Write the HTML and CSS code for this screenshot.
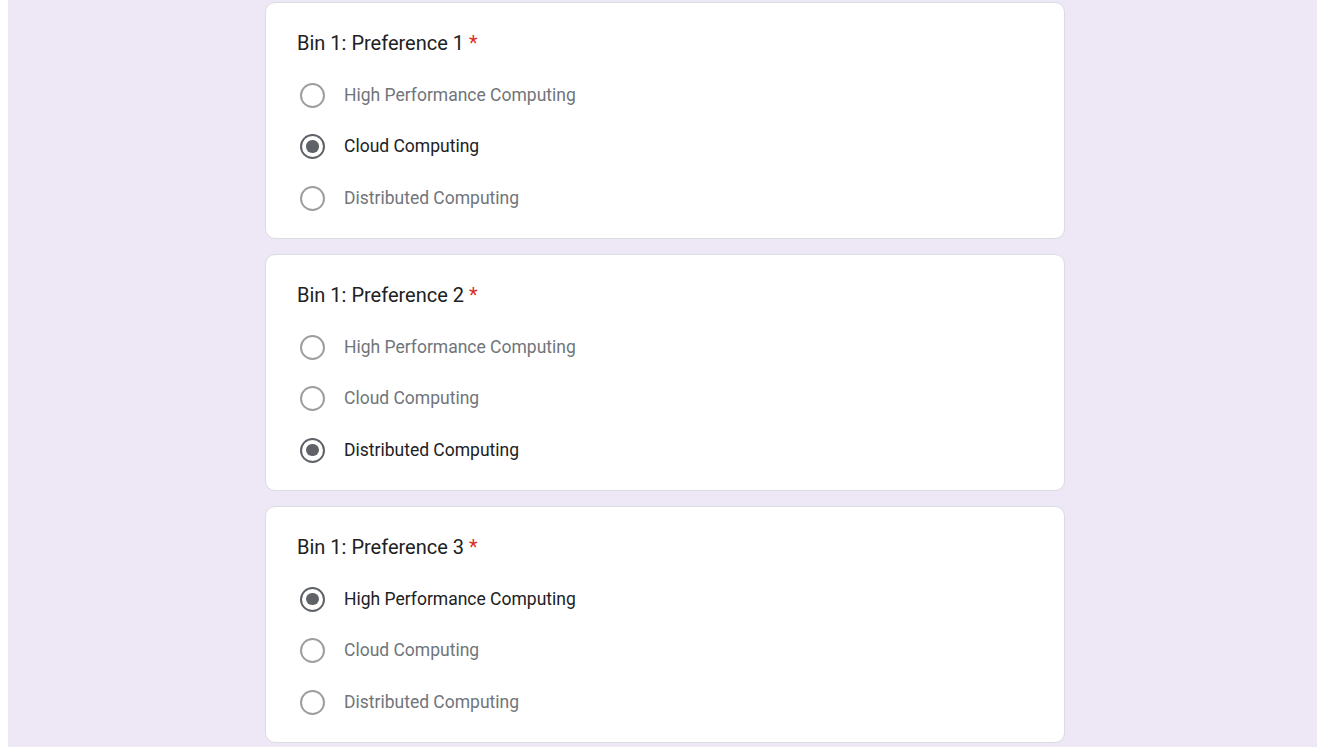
FILE: index.html
```html
<!DOCTYPE html>
<html>
<head>
<meta charset="utf-8">
<link rel="stylesheet" href="styles.css">
</head>
<body>
<div class="page">
  <div class="card">
    <div class="title">Bin 1: Preference 1 <span class="req">*</span></div>
    <div class="options">
      <div class="opt"><span class="radio"></span><span class="label">High Performance Computing</span></div>
      <div class="opt on"><span class="radio"></span><span class="label">Cloud Computing</span></div>
      <div class="opt"><span class="radio"></span><span class="label">Distributed Computing</span></div>
    </div>
  </div>
  <div class="card">
    <div class="title">Bin 1: Preference 2 <span class="req">*</span></div>
    <div class="options">
      <div class="opt"><span class="radio"></span><span class="label">High Performance Computing</span></div>
      <div class="opt"><span class="radio"></span><span class="label">Cloud Computing</span></div>
      <div class="opt on"><span class="radio"></span><span class="label">Distributed Computing</span></div>
    </div>
  </div>
  <div class="card">
    <div class="title">Bin 1: Preference 3 <span class="req">*</span></div>
    <div class="options">
      <div class="opt on"><span class="radio"></span><span class="label">High Performance Computing</span></div>
      <div class="opt"><span class="radio"></span><span class="label">Cloud Computing</span></div>
      <div class="opt"><span class="radio"></span><span class="label">Distributed Computing</span></div>
    </div>
  </div>
</div>
</body>
</html>
```

FILE: styles.css
```css
html, body {
  margin: 0;
  padding: 0;
  background: #ffffff;
  height: 100%;
  overflow: hidden;
}
body {
  padding-left: 8px;
  font-family: Roboto, "Liberation Sans", Arial, sans-serif;
}
.page {
  background: #ede7f6;
  min-height: 100%;
  padding: 2px 0 0 257px;
  box-sizing: border-box;
  display: flex;
  flex-direction: column;
  gap: 15px;
}
.card {
  width: 800px;
  box-sizing: border-box;
  background: #ffffff;
  border: 1px solid #dadce0;
  border-radius: 10px;
  padding: 25px 30px 27.5px 31px;
}
.title {
  font-size: 20px;
  line-height: 30px;
  letter-spacing: 0;
  color: #202124;
}
.req {
  color: #d93025;
}
.options {
  margin-top: 24.5px;
  display: flex;
  flex-direction: column;
  gap: 26.5px;
}
.opt {
  display: flex;
  align-items: center;
  height: 25px;
}
.radio {
  width: 25px;
  height: 25px;
  box-sizing: border-box;
  border: 2.5px solid #9e9e9e;
  border-radius: 50%;
  margin-left: 3px;
  display: flex;
  align-items: center;
  justify-content: center;
  flex: none;
}
.opt.on .radio {
  border-color: #5f6368;
}
.opt.on .radio::after {
  content: "";
  width: 12.5px;
  height: 12.5px;
  border-radius: 50%;
  background: #5f6368;
}
.label {
  margin-left: 19px;
  font-size: 17.5px;
  line-height: 25px;
  letter-spacing: 0;
  color: #70757a;
}
.opt.on .label {
  color: #202124;
}
```
